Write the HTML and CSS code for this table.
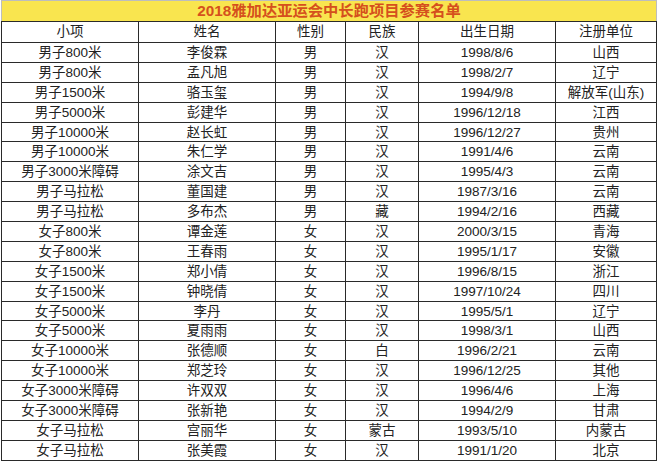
FILE: index.html
```html
<!DOCTYPE html>
<html lang="zh-CN">
<head>
<meta charset="utf-8">
<title>2018雅加达亚运会中长跑项目参赛名单</title>
<link rel="stylesheet" href="styles.css">
</head>
<body>
<table class="roster">
  <colgroup>
    <col class="c1"><col class="c2"><col class="c3"><col class="c4"><col class="c5"><col class="c6">
  </colgroup>
  <thead>
    <tr class="title"><th colspan="6">2018雅加达亚运会中长跑项目参赛名单</th></tr>
    <tr class="head"><th>小项</th><th>姓名</th><th>性别</th><th>民族</th><th>出生日期</th><th>注册单位</th></tr>
  </thead>
  <tbody>
    <tr><td>男子800米</td><td>李俊霖</td><td>男</td><td>汉</td><td>1998/8/6</td><td>山西</td></tr>
    <tr><td>男子800米</td><td>孟凡旭</td><td>男</td><td>汉</td><td>1998/2/7</td><td>辽宁</td></tr>
    <tr><td>男子1500米</td><td>骆玉玺</td><td>男</td><td>汉</td><td>1994/9/8</td><td>解放军(山东)</td></tr>
    <tr><td>男子5000米</td><td>彭建华</td><td>男</td><td>汉</td><td>1996/12/18</td><td>江西</td></tr>
    <tr><td>男子10000米</td><td>赵长虹</td><td>男</td><td>汉</td><td>1996/12/27</td><td>贵州</td></tr>
    <tr><td>男子10000米</td><td>朱仁学</td><td>男</td><td>汉</td><td>1991/4/6</td><td>云南</td></tr>
    <tr><td>男子3000米障碍</td><td>涂文吉</td><td>男</td><td>汉</td><td>1995/4/3</td><td>云南</td></tr>
    <tr><td>男子马拉松</td><td>董国建</td><td>男</td><td>汉</td><td>1987/3/16</td><td>云南</td></tr>
    <tr><td>男子马拉松</td><td>多布杰</td><td>男</td><td>藏</td><td>1994/2/16</td><td>西藏</td></tr>
    <tr><td>女子800米</td><td>谭金莲</td><td>女</td><td>汉</td><td>2000/3/15</td><td>青海</td></tr>
    <tr><td>女子800米</td><td>王春雨</td><td>女</td><td>汉</td><td>1995/1/17</td><td>安徽</td></tr>
    <tr><td>女子1500米</td><td>郑小倩</td><td>女</td><td>汉</td><td>1996/8/15</td><td>浙江</td></tr>
    <tr><td>女子1500米</td><td>钟晓倩</td><td>女</td><td>汉</td><td>1997/10/24</td><td>四川</td></tr>
    <tr><td>女子5000米</td><td>李丹</td><td>女</td><td>汉</td><td>1995/5/1</td><td>辽宁</td></tr>
    <tr><td>女子5000米</td><td>夏雨雨</td><td>女</td><td>汉</td><td>1998/3/1</td><td>山西</td></tr>
    <tr><td>女子10000米</td><td>张德顺</td><td>女</td><td>白</td><td>1996/2/21</td><td>云南</td></tr>
    <tr><td>女子10000米</td><td>郑芝玲</td><td>女</td><td>汉</td><td>1996/12/25</td><td>其他</td></tr>
    <tr><td>女子3000米障碍</td><td>许双双</td><td>女</td><td>汉</td><td>1996/4/6</td><td>上海</td></tr>
    <tr><td>女子3000米障碍</td><td>张新艳</td><td>女</td><td>汉</td><td>1994/2/9</td><td>甘肃</td></tr>
    <tr><td>女子马拉松</td><td>宫丽华</td><td>女</td><td>蒙古</td><td>1993/5/10</td><td>内蒙古</td></tr>
    <tr><td>女子马拉松</td><td>张美霞</td><td>女</td><td>汉</td><td>1991/1/20</td><td>北京</td></tr>
  </tbody>
</table>
</body>
</html>
```
FILE: styles.css
```css
html, body {
  margin: 0;
  padding: 0;
  background: #ffffff;
}
body {
  padding-left: 1px;
  font-family: "Liberation Sans", "Noto Sans CJK SC", sans-serif;
  color: #222222;
}
.roster {
  border-collapse: collapse;
  table-layout: fixed;
  width: 655px;
}
.c1 { width: 137px; }
.c2 { width: 137px; }
.c3 { width: 70px; }
.c4 { width: 73px; }
.c5 { width: 137px; }
.c6 { width: 101px; }
.roster th,
.roster td {
  border: 1px solid #2a2a2a;
  padding: 0;
  text-align: center;
  vertical-align: middle;
  font-size: 13.5px;
  font-weight: normal;
  line-height: 16px;
  white-space: nowrap;
}
.title th {
  height: 20px;
  background: #f9e54f;
  color: #d5501d;
  font-weight: bold;
  font-size: 15.3px;
  border-top-color: #bdbdbd;
  border-left-color: #bdbdbd;
  border-right-color: #bdbdbd;
}
.head th {
  height: 20px;
}
.roster tbody td {
  height: 18.9px;
  line-height: 15px;
}
```
